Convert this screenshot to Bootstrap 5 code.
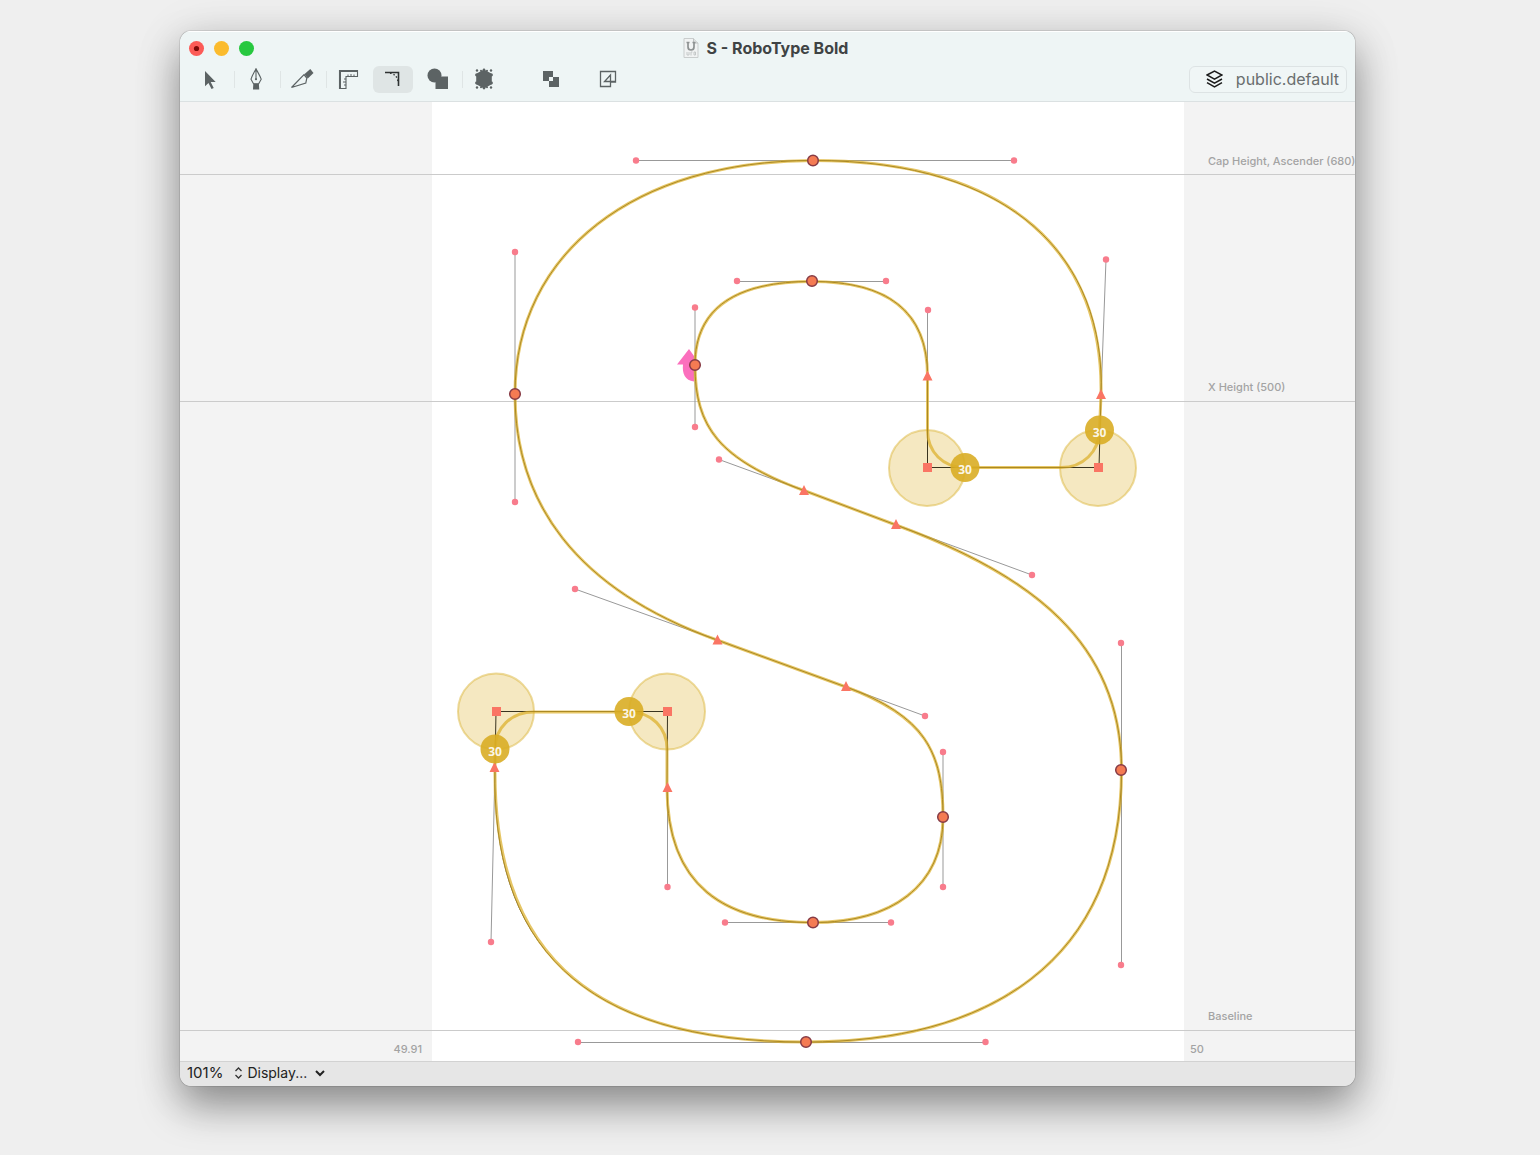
<!DOCTYPE html>
<html lang="en">
<head>
<meta charset="utf-8">
<meta name="viewport" content="width=device-width, initial-scale=1">
<title>S - RoboType Bold</title>
<link href="https://cdn.jsdelivr.net/npm/bootstrap@5.3.0/dist/css/bootstrap.min.css" rel="stylesheet">
<style>
body{background:#efefef;font-family:Inter,"Liberation Sans",sans-serif;color:#262626;padding:31px 185px 68px 180px}
.app-window{border-radius:11px;box-shadow:0 0 1px rgba(0,0,0,.9),0 20px 40px rgba(0,0,0,.38),0 4px 50px rgba(0,0,0,.1);background:#f3f3f3}
.title-area{background:#eef5f5;border-bottom:1px solid #dbe1e2;height:71px;box-shadow:inset 0 1px 0 #fff}
.title-row{height:34px;padding-left:9px}
.doc-title{font-size:16px;line-height:20px;font-weight:700;color:#3f4344}
.light{width:15px;height:15px;border:0;border-radius:50%;padding:0;margin-right:10px}
.light-red{background:#fc5b57}.light-yellow{background:#fbbb2d}.light-green{background:#27c83f}
.tool-row{height:28px;padding:0 8px 0 10px}
.tool{width:40px;height:27px;border:0;border-radius:6px;background:none;padding:0;color:#5c6364}
.tool.active{background:#dfe5e5;color:#2e3232}
.tool svg{display:block;margin:auto}
.divide{width:1px;height:17px;background:#dfe5e5;margin:0 1px 0 4px}
.gap-tight{margin-left:5px}
.gap-wide{margin-left:27px}
.gap-mid{margin-left:17px}
.layer-btn{height:27px;gap:13px;border:1px solid #dde3e4;border-radius:6px;background:#f0f6f6;font-size:16px;line-height:20px;color:#6a6e6f;padding:0 7px 0 16px}
.sheet text{font-family:Inter,"Liberation Sans",sans-serif;font-size:11px;font-weight:500;fill:#a3a3a3}
.sheet .radius-label text{font-family:"Open Sans","Noto Sans",sans-serif;font-weight:700;font-size:12px;fill:#fff;text-anchor:middle}
.status-row{height:25px;background:#e6e6e6;border-top:1px solid #d2d2d2;padding:0 7px 2px;font-size:14px;line-height:20px}
.status-row button{border:0;background:none;padding:0;color:#222}
.status-row .zoom-btn{font-size:15px;gap:11px;margin-right:4px}
</style>
</head>
<body>
<main class="app-window overflow-hidden d-flex flex-column">
<header class="title-area">
  <div class="title-row d-flex align-items-center position-relative">
    <button class="light light-red" aria-label="Close"><svg width="15" height="15" class="d-block"><circle cx="7.500" cy="7.500" r="2.600" fill="#7c0a08"/></svg></button>
    <button class="light light-yellow" aria-label="Minimize"></button>
    <button class="light light-green" aria-label="Zoom"></button>
    <div class="position-absolute start-0 end-0 d-flex justify-content-center align-items-center pe-1">
      <svg width="16" height="20" viewBox="0 0 16 20" class="me-2" aria-hidden="true"><path d="M1 .5h9.500l4.500 4.500v14.500H1z" fill="#f1f3f3" stroke="#c9cdcd"/><path d="M10.500.5V5H15" fill="#dfe2e2" stroke="#c0c4c4"/><path d="M5 4.500V9a3 3 0 0 0 6 0V4.500M3.500 4.500h3M9.500 4.500h3" fill="none" stroke="#8e9292" stroke-width="1.700"/><path d="M4 14v3h2v-3M8 17.500V14h1.500M11 14h1.500v3H11z" fill="none" stroke="#c4c8c8"/></svg>
      <h1 class="doc-title m-0">S - RoboType Bold</h1>
    </div>
  </div>
  <div class="tool-row d-flex align-items-center">
    <button class="tool" aria-label="Select"><svg width="22" height="22" viewBox="0 0 22 22"><path d="M6 3v15.300l3.500-3.300 3 6 2.200-1-3-6h5z" fill="currentColor"/></svg></button>
    <span class="divide"></span>
    <button class="tool" aria-label="Pen"><svg width="22" height="22" viewBox="0 0 22 22"><path d="M11 .7C9.500 4 7 7.500 6 11.200l2.500 4.600h5.200l2.500-4.600C15 7.500 12.500 4 11 .7zM11 1v9.500" fill="none" stroke="currentColor" stroke-width="1.100"/><circle cx="11" cy="11.200" r="1.100" fill="currentColor"/><path d="M8.300 15.800h5.600l.3 5.700H8z" fill="currentColor"/></svg></button>
    <span class="divide"></span>
    <button class="tool" aria-label="Knife"><svg width="24" height="22" viewBox="0 0 24 22"><path d="M1.500 19.500 14 6.700l2.800 3.500-1 4.800z" fill="none" stroke="currentColor" stroke-width="1.200"/><path d="m14.300 6.200 6-5.200 3.200 4-5.700 5.600z" fill="currentColor"/></svg></button>
    <span class="divide"></span>
    <button class="tool" aria-label="Measure"><svg width="22" height="22" viewBox="0 0 22 22"><path d="M2.500 20.500v-18h18v6h-11.500v12z" fill="none" stroke="currentColor" stroke-width="1.100"/><path d="M3 20.500V3h17.500" fill="none" stroke="currentColor" stroke-width="2"/><path d="M11 8.500V6.500M14 8.500V6M17 8.500V6.500M9 11H7M9 14H6M9 17H7" stroke="currentColor"/></svg></button>
    <button class="tool active gap-tight" aria-label="Corner radius"><svg width="22" height="22" viewBox="0 0 22 22"><path d="M3 4.500H16.500V18" fill="none" stroke="currentColor" stroke-width="1.600"/><path d="M8 5c4.500 1 7 3.500 8 8" fill="none" stroke="currentColor" stroke-width="1.400" stroke-dasharray="1.500 2"/></svg></button>
    <button class="tool gap-tight" aria-label="Shapes"><svg width="24" height="22" viewBox="0 0 24 22"><circle cx="8.500" cy="7.500" r="7" fill="currentColor"/><path d="M9.500 8.500h12.500v12.500H9.500z" fill="currentColor"/></svg></button>
    <span class="divide"></span>
    <button class="tool" aria-label="Scale"><svg width="22" height="22" viewBox="0 0 22 22"><path d="m11 1.500 7.800 4.200v10.600L11 20.500 3.200 16.300V5.700z" fill="currentColor"/><g fill="currentColor"><circle cx="4" cy="2.500" r="1.200"/><circle cx="8" cy="2.800" r="1"/><circle cx="11" cy="2" r="1.400"/><circle cx="14" cy="2.800" r="1"/><circle cx="18" cy="2.500" r="1.200"/><circle cx="3.500" cy="7" r="1.400"/><circle cx="18.500" cy="7" r="1.400"/><circle cx="3.500" cy="15" r="1.400"/><circle cx="18.500" cy="15" r="1.400"/><circle cx="4" cy="19.500" r="1.200"/><circle cx="8" cy="19.200" r="1"/><circle cx="11" cy="20" r="1.400"/><circle cx="14" cy="19.200" r="1"/><circle cx="18" cy="19.500" r="1.200"/></g></svg></button>
    <button class="tool gap-wide" aria-label="Remove overlap"><svg width="22" height="22" viewBox="0 0 22 22"><path d="M3 3h10v6h6v10H9v-6H3z" fill="currentColor"/><path d="M9 9h4v4h-4z" fill="#eef5f5"/></svg></button>
    <button class="tool gap-mid" aria-label="Edit in place"><svg width="22" height="22" viewBox="0 0 22 22"><path d="M3.500 3.500h15v10.500h-5v4.500h-10z M13.500 14V7L7.500 13.500H18.500" fill="none" stroke="currentColor" stroke-width="1.300"/></svg></button>
    <button class="layer-btn d-flex align-items-center ms-auto"><svg width="17" height="18" viewBox="0 0 17 18" fill="none" stroke="#1c1c1c" stroke-width="1.500" aria-hidden="true"><path d="m1 5 7.500-4L16 5 8.500 9.200zM1 9l7.500 4.200L16 9M1 12.700 8.500 17l7.500-4.300"/></svg>public.default</button>
  </div>
</header>
<svg class="sheet d-block w-100" viewBox="180 102 1175 959" role="img" aria-label="Glyph S outline">
  <rect x="180" y="102" width="1175" height="959" fill="#f3f3f3"/>
  <rect x="432" y="102" width="752" height="959" fill="#fff"/>
  <path d="M180 174.500H1355M180 401.500H1355M180 1030.500H1355" stroke="#cbcbcb"/>
  <text x="1208" y="165">Cap Height, Ascender (680)</text>
  <text x="1208" y="391">X Height (500)</text>
  <text x="1208" y="1020">Baseline</text>
  <text x="422" y="1053" text-anchor="end">49.91</text>
  <text x="1190" y="1053">50</text>
  <path d="M689 349 677 364.500h6c-1 9 2 16 11 17V356z" fill="#fb6fbd"/>
  <g fill="#e1b93f" fill-opacity=".32" stroke="#dcb53a" stroke-opacity=".5" stroke-width="2"><circle cx="927" cy="468" r="38"/><circle cx="1098" cy="468" r="38"/><circle cx="496" cy="711.500" r="38"/><circle cx="667" cy="711.500" r="38"/></g>
  <path d="M636 160.500H1014M515 252V502M1106 259.500 1101 395M737 281.500H886M695 307V427M927.500 310V376M719 459.500 804 490.500M896 525 1032 575M575 589 717 640M846 687 925 716M943 752V887M1121.500 643V965M725 922.500H891M667.500 787V887M495 767 491 942M578 1042.500H985" stroke="#999" fill="none"/>
  <path d="M1101 395C1106 259 1014 160.500 813 160.500C636 160.500 515 252 515 394C515 502 575 589 717 640L846 687C925 716 943 752 943 817C943 887 891 922.500 813 922.500C725 922.500 667 887 667 787L667.500 711.500H496L495 767C491 942 578 1042 806 1042C985 1042 1121.500 965 1121.500 770C1121.500 643 1032 575 896 525L804 490.500C719 459.500 695 427 695 365C695 307 737 281.500 812 281.500C886 281.500 927.500 310 927.500 376V467.500H1099Z" fill="none" stroke="#39331f" stroke-width="1"/>
  <path d="M1101 395C1104 257 1014 160.500 813 160.500C636 160.500 515 252 515 394C515 502 575 589 717 640L846 687C925 716 943 752 943 817C943 887 891 922.500 813 922.500C725 922.500 667 887 667 787V749C667 728 652 712 629 712H534C511 712 495 728 495 749V767C493 942 578 1042 806 1042C985 1042 1121.500 965 1121.500 770C1121.500 643 1032 575 896 525L804 490.500C719 459.500 695 427 695 365C695 307 737 281.500 812 281.500C886 281.500 927.500 310 927.500 376V430C927.500 452 943 467.500 965 467.500H1061C1083 467.500 1099 452 1099.500 430Z" fill="none" stroke="#dcae25" stroke-width="3" stroke-opacity=".7"/>
  <g fill="#fa7564"><path d="M923 463H932V472H923zM1094 463H1103V472H1094zM492 707H501V716H492zM663 707H672V716H663z"/>
  <path d="M927.500 370.500 932.500 380.500H922.500zM1101 389 1106 399H1096zM804 485 809 495H799zM896 519 901 529H891zM717.500 634.500 722.500 644.500H712.500zM846 681 851 691H841zM494.500 762 499.500 772H489.500zM667.500 782 672.500 792H662.500z"/></g>
  <g fill="#f47b53" stroke="#873b45" stroke-width="1.500"><circle cx="813" cy="160.500" r="5.300"/><circle cx="812" cy="281" r="5.300"/><circle cx="695" cy="365" r="5.300"/><circle cx="515" cy="394" r="5.300"/><circle cx="1121" cy="770" r="5.300"/><circle cx="943" cy="817" r="5.300"/><circle cx="813" cy="922.500" r="5.300"/><circle cx="806" cy="1042" r="5.300"/></g>
  <g fill="#f87c8c"><circle cx="636" cy="160.500" r="3.200"/><circle cx="1014" cy="160.500" r="3.200"/><circle cx="515" cy="252" r="3.200"/><circle cx="515" cy="502" r="3.200"/><circle cx="1106" cy="259.500" r="3.200"/><circle cx="737" cy="281" r="3.200"/><circle cx="886" cy="281" r="3.200"/><circle cx="695" cy="307.500" r="3.200"/><circle cx="695" cy="427" r="3.200"/><circle cx="928" cy="310" r="3.200"/><circle cx="719" cy="459.500" r="3.200"/><circle cx="1032" cy="575" r="3.200"/><circle cx="575" cy="589" r="3.200"/><circle cx="925" cy="716" r="3.200"/><circle cx="943" cy="752" r="3.200"/><circle cx="943" cy="887" r="3.200"/><circle cx="1121" cy="643" r="3.200"/><circle cx="1121" cy="965" r="3.200"/><circle cx="725" cy="922.500" r="3.200"/><circle cx="891" cy="922.500" r="3.200"/><circle cx="667.500" cy="887" r="3.200"/><circle cx="491" cy="942" r="3.200"/><circle cx="578" cy="1042" r="3.200"/><circle cx="985.500" cy="1042" r="3.200"/></g>
  <g class="radius-label" fill="#d9ad25" fill-opacity=".9"><circle cx="965" cy="467.500" r="14.500"/><circle cx="1099.500" cy="430" r="14.500"/><circle cx="629" cy="711.500" r="14.500"/><circle cx="495" cy="749" r="14.500"/><text x="965" y="474">30</text><text x="1099.500" y="437">30</text><text x="629" y="718">30</text><text x="495" y="756">30</text></g>
</svg>
<footer class="status-row d-flex align-items-center">
  <button class="zoom-btn d-flex align-items-center">101%<svg width="9" height="12" viewBox="0 0 9 12" fill="none" stroke="#333" stroke-width="1.300" aria-hidden="true"><path d="m1.500 4 3-3 3 3M1.500 8l3 3 3-3"/></svg></button>
  <button class="d-flex align-items-center">Display...<svg width="10" height="8" viewBox="0 0 10 8" class="ms-2" fill="none" stroke="#222" stroke-width="2" aria-hidden="true"><path d="m1 2 4 4 4-4"/></svg></button>
</footer>
</main>
<script src="https://cdn.jsdelivr.net/npm/bootstrap@5.3.0/dist/js/bootstrap.bundle.min.js"></script>
</body>
</html>
